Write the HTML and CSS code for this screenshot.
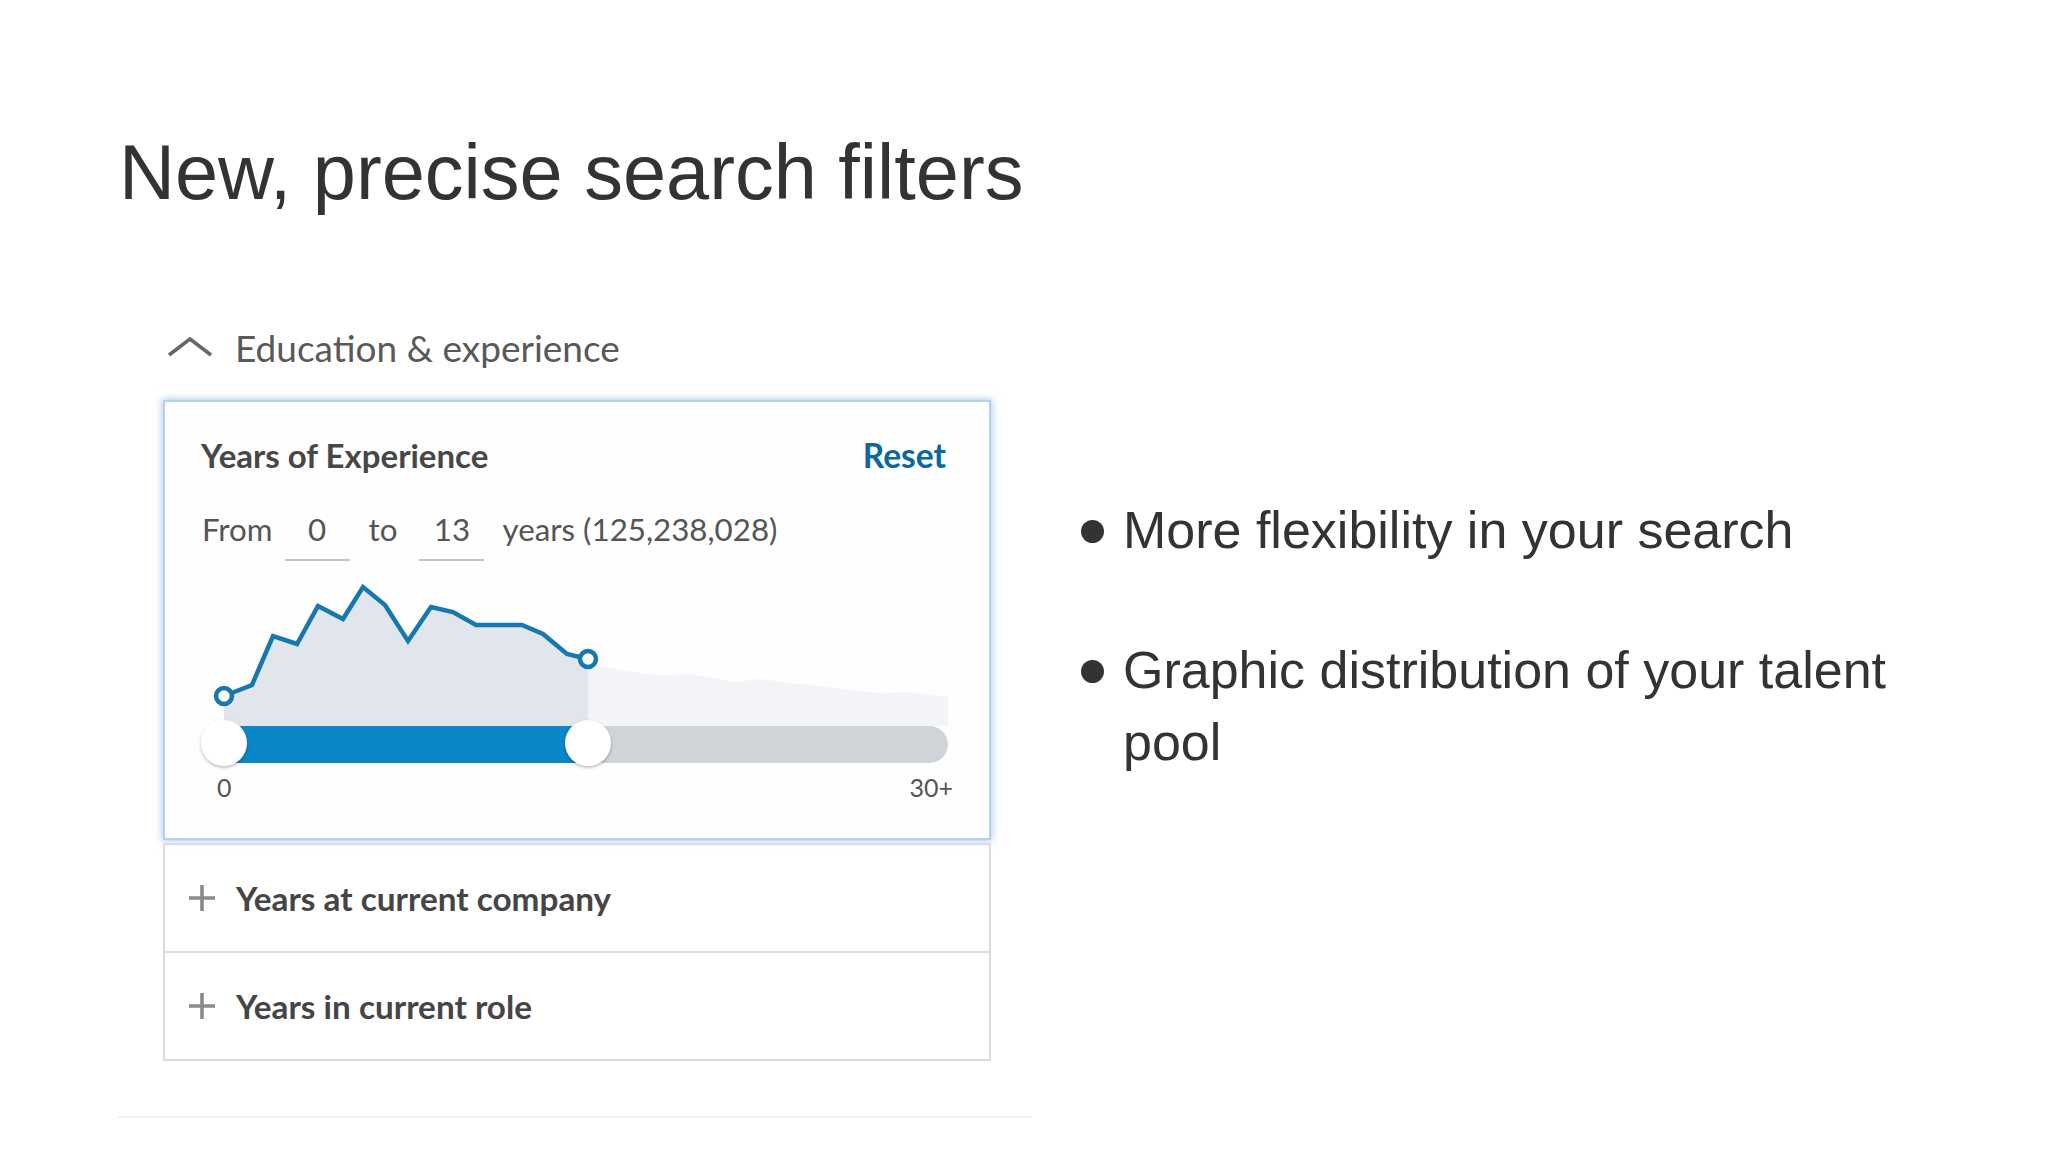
FILE: index.html
```html
<!DOCTYPE html>
<html lang="en">
<head>
<meta charset="utf-8">
<title>New, precise search filters</title>
<link rel="stylesheet" href="styles.css">
</head>
<body>
<div class="slide">
  <h1 class="title">New, precise search filters</h1>
  <div class="content">
    <div class="shot">
      <div class="section-head">
        <svg class="chevron" width="46" height="22" viewBox="0 0 46 22"><polyline points="2,19 23,3 44,19" fill="none" stroke="#666" stroke-width="3.5" stroke-linejoin="miter"/></svg>
        <span>Education &amp; experience</span>
      </div>
      <div class="card">
        <div class="card-head">
          <span class="card-title">Years of Experience</span>
          <span class="reset">Reset</span>
        </div>
        <div class="range-row">
          <span class="from">From</span>
          <span class="field">0</span>
          <span class="to">to</span>
          <span class="field">13</span>
          <span class="years">years (125,238,028)</span>
        </div>
        <svg class="chart" width="824" height="195" viewBox="165 575 824 195">
          <defs>
            <filter id="sh" x="-50%" y="-50%" width="200%" height="200%">
              <feDropShadow dx="0" dy="1.5" stdDeviation="1.8" flood-color="#000" flood-opacity="0.3"/>
            </filter>
          </defs>
          <polygon fill="#f2f4f8" points="588,661 600,666 620,670 640,673 660,675 690,674 710,677 735,682 760,679 790,683 820,686 850,690 880,693 910,692 948,697 948,726 588,726"/>
          <polygon fill="#e1e5ec" points="224,696 252,685 273,636 297,644 318,606 343,619 363,587 385,605 408,641 431,607 453,612 476,625 522,625 543,634 567,654 588,659 588,726 224,726"/>
          <rect x="224" y="726" width="724" height="37" rx="18.5" fill="#d0d3d8"/>
          <rect x="224" y="726" width="364" height="37" fill="#0b86c6"/>
          <polyline fill="none" stroke="#1778ad" stroke-width="4.5" stroke-linejoin="miter" points="224,696 252,685 273,636 297,644 318,606 343,619 363,587 385,605 408,641 431,607 453,612 476,625 522,625 543,634 567,654 588,659"/>
          <circle cx="224" cy="696" r="8" fill="#fff" stroke="#1778ad" stroke-width="4.5"/>
          <circle cx="588" cy="659" r="8" fill="#fff" stroke="#1778ad" stroke-width="4.5"/>
          <circle cx="224" cy="743" r="23" fill="#fff" filter="url(#sh)"/>
          <circle cx="588" cy="743" r="23" fill="#fff" filter="url(#sh)"/>
        </svg>
        <div class="axis"><span>0</span><span>30+</span></div>
      </div>
      <div class="row">
        <svg class="plus" width="28" height="28" viewBox="0 0 28 28"><path d="M14 1V27M1 14H27" stroke="#8a8a8a" stroke-width="3.6" fill="none"/></svg>
        <span>Years at current company</span>
      </div>
      <div class="row">
        <svg class="plus" width="28" height="28" viewBox="0 0 28 28"><path d="M14 1V27M1 14H27" stroke="#8a8a8a" stroke-width="3.6" fill="none"/></svg>
        <span>Years in current role</span>
      </div>
    </div>
    <ul class="bullets">
      <li><span class="dot"></span><span class="txt">More flexibility in your search</span></li>
      <li><span class="dot"></span><span class="txt">Graphic distribution of your talent pool</span></li>
    </ul>
  </div>
</div>
</body>
</html>
```
FILE: styles.css
```css
html, body {
  margin: 0;
  padding: 0;
  background: #ffffff;
}

body {
  font-family: "Liberation Sans", Arial, sans-serif;
}

.slide {
  width: 2048px;
  height: 1152px;
  box-sizing: border-box;
  padding-top: 128px;
  overflow: hidden;
}

.title {
  margin: 0 0 0 119px;
  font-size: 77.5px;
  line-height: 88px;
  font-weight: 400;
  color: #333333;
}

.content {
  display: flex;
  margin-top: 94px;
}

.shot {
  width: 913px;
  margin-left: 118px;
  padding: 0 0 55px 45px;
  box-sizing: border-box;
  border-bottom: 2px solid #eef0f2;
  font-family: "Lato", "Open Sans", sans-serif;
}

.section-head {
  height: 74px;
  display: flex;
  align-items: center;
  gap: 22px;
  padding-left: 4px;
  font-size: 37px;
  color: #595959;
}

.chevron {
  display: block;
}

.card {
  width: 828px;
  margin-top: 16px;
  box-sizing: border-box;
  border: 2px solid #b2d1ec;
  box-shadow: 0 0 7px 1px rgba(105, 160, 220, 0.55);
  padding: 33px 0 36px;
  background: #fefefe;
}

.card-head {
  height: 40px;
  display: flex;
  align-items: center;
  justify-content: space-between;
  padding: 0 43px 0 36px;
}

.card-title {
  font-size: 33px;
  font-weight: 700;
  color: #474747;
}

.reset {
  font-size: 33.5px;
  font-weight: 700;
  color: #0d679c;
}

.range-row {
  margin-top: 34px;
  padding-left: 37px;
  display: flex;
  align-items: flex-start;
  font-size: 31.3px;
  line-height: 40px;
  color: #555555;
}

.field {
  width: 65px;
  text-align: center;
  padding-bottom: 10px;
  border-bottom: 2px solid #c4c4c4;
}

.from {
  margin-right: 12px;
}

.to {
  margin: 0 22px 0 19px;
}

.years {
  margin-left: 18px;
}

.chart {
  display: block;
  margin-top: 14px;
}

.axis {
  margin-top: 2px;
  height: 30px;
  display: flex;
  justify-content: space-between;
  align-items: center;
  padding: 0 36px 0 52px;
  font-size: 25px;
  color: #555555;
}

.row {
  width: 828px;
  height: 110px;
  box-sizing: border-box;
  border: 2px solid #dcdcdc;
  display: flex;
  align-items: center;
  gap: 20px;
  padding-left: 23px;
  font-size: 33.3px;
  font-weight: 700;
  color: #454545;
}

.card + .row {
  margin-top: 3px;
}

.row + .row {
  border-top: none;
  height: 108px;
}

.plus {
  display: block;
}

.bullets {
  list-style: none;
  margin: 0 0 0 50px;
  padding: 184px 0 0;
  font-size: 52px;
  line-height: 72px;
  color: #333333;
}

.bullets li {
  display: flex;
  align-items: flex-start;
  gap: 19px;
}

.bullets li + li {
  margin-top: 68px;
}

.dot {
  flex: none;
  width: 23px;
  height: 23px;
  margin-top: 26px;
  border-radius: 50%;
  background: #333333;
}

.txt {
  width: 820px;
}
```
